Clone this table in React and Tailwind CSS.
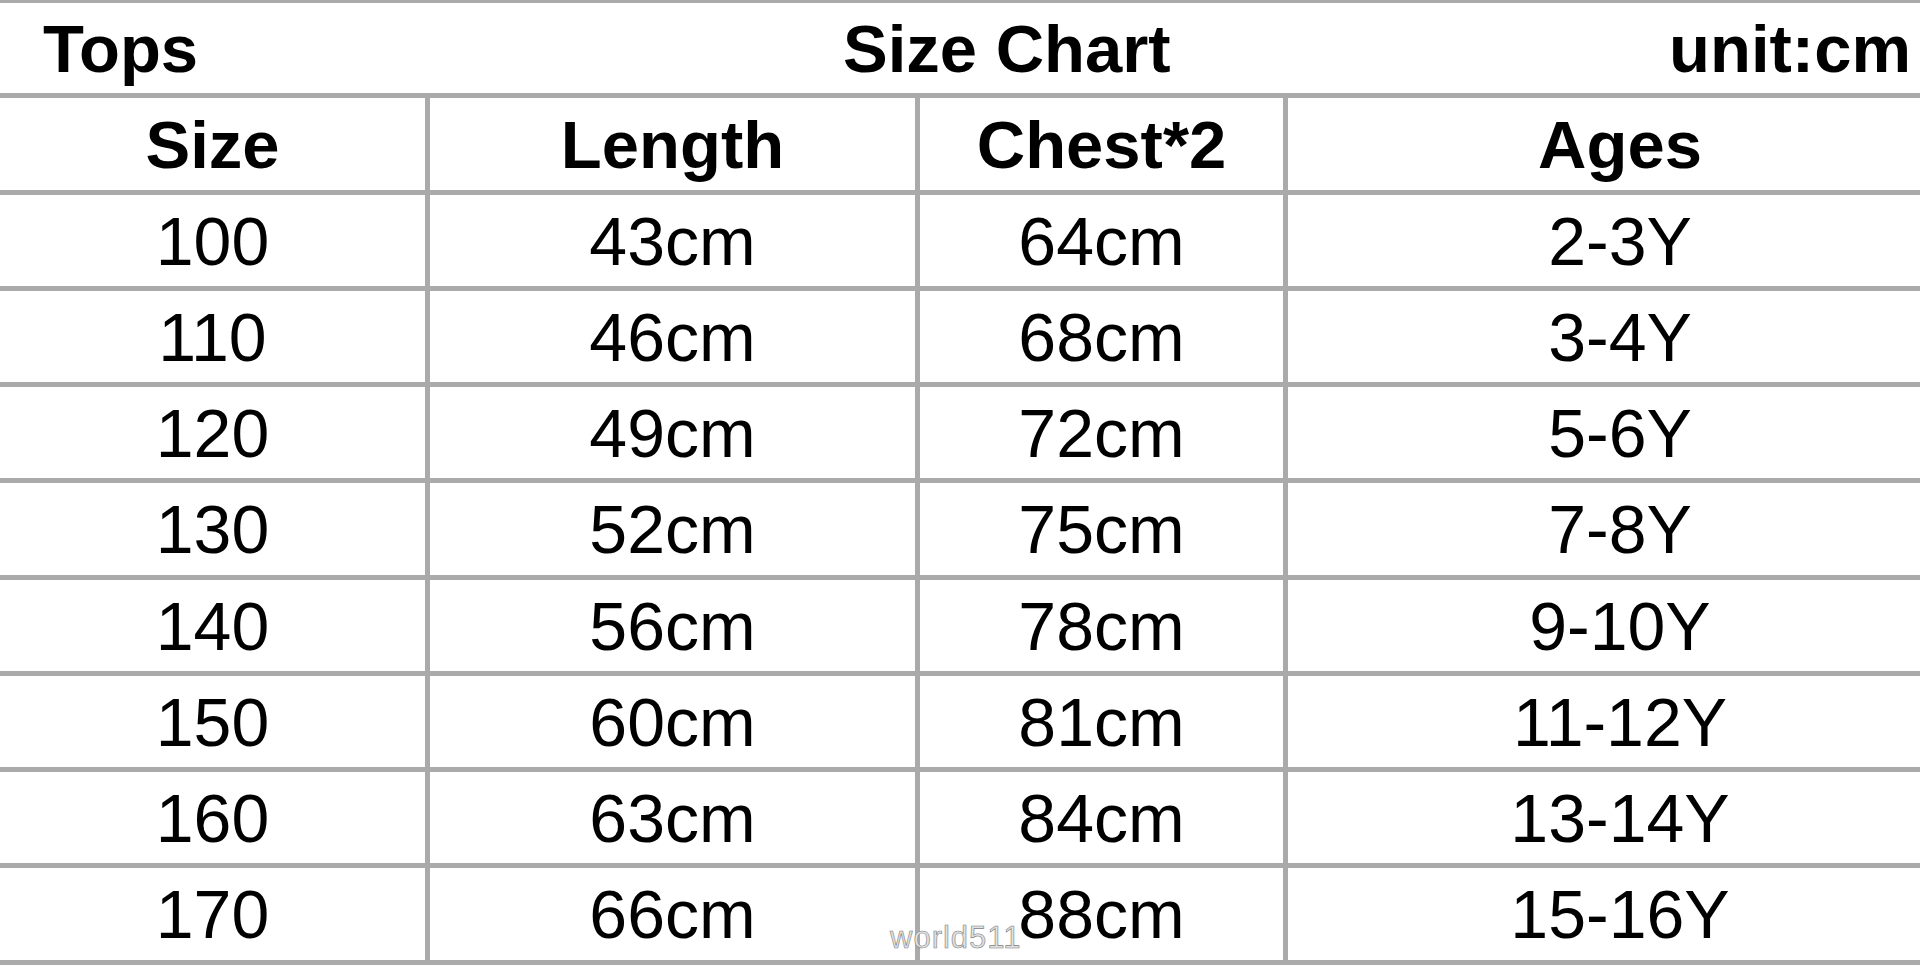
import React from "react";

const rows = [
  ["100", "43cm", "64cm", "2-3Y"],
  ["110", "46cm", "68cm", "3-4Y"],
  ["120", "49cm", "72cm", "5-6Y"],
  ["130", "52cm", "75cm", "7-8Y"],
  ["140", "56cm", "78cm", "9-10Y"],
  ["150", "60cm", "81cm", "11-12Y"],
  ["160", "63cm", "84cm", "13-14Y"],
  ["170", "66cm", "88cm", "15-16Y"],
];

const heights = ["h-[96px]", "h-[96px]", "h-[96px]", "h-[97px]", "h-[96px]", "h-[96px]", "h-[96px]", "h-[97px]"];

function Row({ cells, h, bold }) {
  const base = `flex items-center justify-center border-b-[5px] border-[#aaaaaa] ${h} ${bold ? "font-bold text-[67px]" : "font-normal text-[68px]"}`;
  return (
    <>
      <div className={`${base} border-r-[5px]`}>{cells[0]}</div>
      <div className={`${base} border-r-[5px]`}>{cells[1]}</div>
      <div className={`${base} border-r-[5px]`}>{cells[2]}</div>
      <div className={base}>{cells[3]}</div>
    </>
  );
}

export default function App() {
  return (
    <div className="relative w-[1920px] h-[966px] overflow-hidden bg-white text-black font-['Liberation_Sans',Arial,Helvetica,sans-serif] leading-none">
      <div className="flex items-center h-[98px] border-t-[3px] border-b-[5px] border-[#aaaaaa] font-bold text-[67px]">
        <div className="w-[843px] pl-[43px]">Tops</div>
        <div>Size Chart</div>
        <div className="ml-auto pr-[9px]">unit:cm</div>
      </div>
      <div className="grid grid-cols-[430px_490px_368px_664px] w-[1952px]">
        <Row cells={["Size", "Length", "Chest*2", "Ages"]} h="h-[97px]" bold />
        {rows.map((r, i) => (
          <Row key={r[0]} cells={r} h={heights[i]} />
        ))}
      </div>
      <div className="absolute left-[890px] top-[922px] text-[31px] leading-none tracking-[1px] text-[#e0e0e0] [-webkit-text-stroke:0.6px_#808080] font-['Liberation_Sans',Arial,sans-serif]">
        world511
      </div>
    </div>
  );
}
